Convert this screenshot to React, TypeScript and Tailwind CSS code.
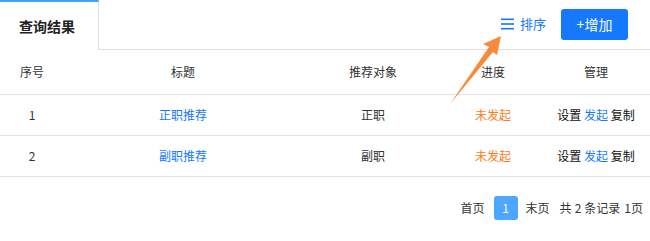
import React from "react";

const cols = "grid grid-cols-[64px_238px_142px_98px_1fr]";

const rows = [
  { no: 1, title: "正职推荐", target: "正职" },
  { no: 2, title: "副职推荐", target: "副职" },
];

const SortIcon = () => (
  <svg width="13" height="12" viewBox="0 0 13 12" className="mr-[6px]">
    <rect x="0" y="0.5" width="13" height="1.6" fill="#1677ff" />
    <rect x="0" y="5.2" width="13" height="1.6" fill="#1677ff" />
    <rect x="0" y="9.9" width="13" height="1.6" fill="#1677ff" />
  </svg>
);

export default function App() {
  return (
    <div
      className="relative w-[650px] h-[241px] bg-white text-[12px] text-[#333]"
      style={{ fontFamily: '"Noto Sans CJK SC", "Noto Sans", sans-serif' }}
    >
      {/* tab bar */}
      <div className="flex h-[50px]">
        <div className="w-[99px] h-full border-t-2 border-[#409eff] border-r border-r-[#e0e0e0] flex items-center justify-center pr-[4px] text-[14px] font-bold text-[#222]">
          查询结果
        </div>
        <div className="flex-1 border-b border-[#e0e0e0] flex items-center justify-end pr-[22px]">
          <div className="flex items-center text-[13px] text-[#1677ff] mr-[15px] mt-[-2px]">
            <SortIcon />
            排序
          </div>
          <button className="w-[67px] h-[31px] mt-[-1px] rounded-[3px] bg-[#1677ff] text-white text-[14px] flex items-center justify-center">
            +增加
          </button>
        </div>
      </div>

      {/* table */}
      <div className={`${cols} h-[45px] items-center text-center border-b border-[#e3e3e3]`}>
        <div>序号</div>
        <div>标题</div>
        <div>推荐对象</div>
        <div>进度</div>
        <div>管理</div>
      </div>
      {rows.map((r) => (
        <div
          key={r.no}
          className={`${cols} h-[41px] items-center text-center border-b border-[#e3e3e3]`}
        >
          <div>{r.no}</div>
          <div className="text-[#1677ff]">{r.title}</div>
          <div>{r.target}</div>
          <div className="text-[#ff7a14]">未发起</div>
          <div className="text-[#111]">
            设置 <span className="text-[#1677ff]">发起</span> 复制
          </div>
        </div>
      ))}

      {/* pagination */}
      <div className="flex items-center justify-end pr-[7px] mt-[19px]">
        <span>首页</span>
        <span className="ml-[9px] w-[24px] h-[24px] rounded-[3px] bg-[#4da6ff] text-white flex items-center justify-center">
          1
        </span>
        <span className="ml-[8px]">末页</span>
        <span className="ml-[10px] flex items-center">
          共<span className="mx-[3px]">2</span>条记录<span className="ml-[4px]">1</span>页
        </span>
      </div>

      {/* annotation arrow */}
      <svg
        className="absolute left-0 top-0 pointer-events-none"
        width="650"
        height="241"
        viewBox="0 0 650 241"
      >
        <polygon
          points="501,36 483,44 489,47 450,104 493,52 497,55"
          fill="#f68b3c"
        />
      </svg>
    </div>
  );
}
